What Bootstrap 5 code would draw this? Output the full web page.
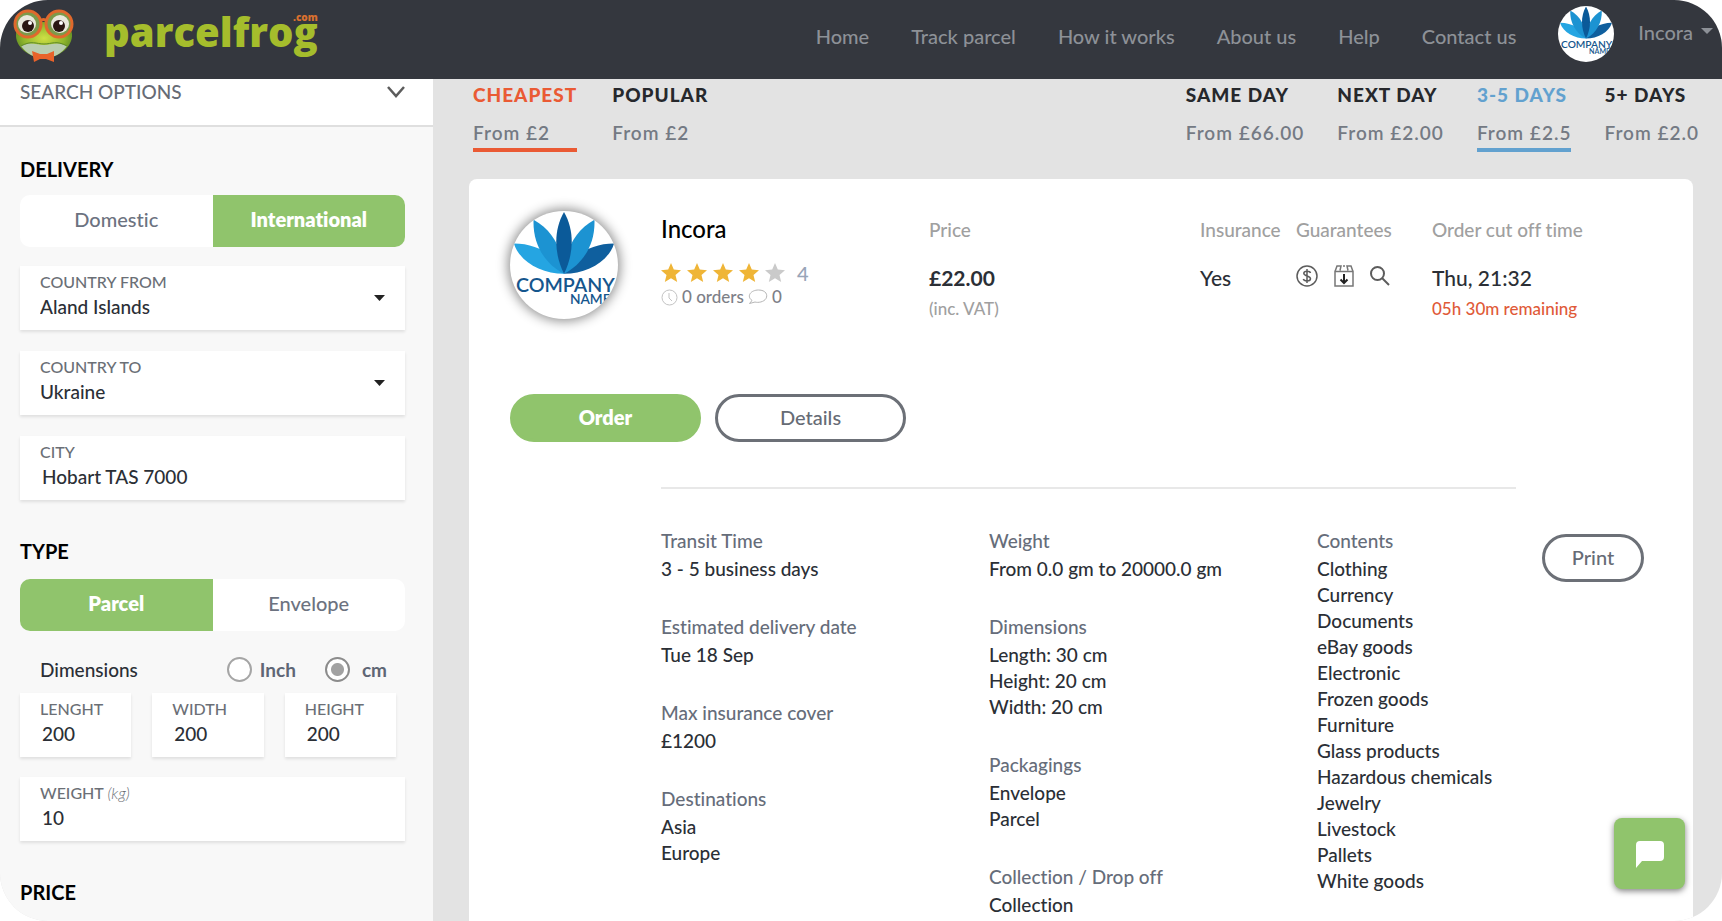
<!DOCTYPE html>
<html lang="en">
<head>
<meta charset="utf-8">
<meta name="viewport" content="width=device-width, initial-scale=1">
<title>parcelfrog.com</title>
<link href="https://cdn.jsdelivr.net/npm/bootstrap@5.3.0/dist/css/bootstrap.min.css" rel="stylesheet">
<style>
  body { font-family: "Lato Medium", Lato, "Liberation Sans", sans-serif; font-size: 19px; line-height: 26px; color: #2b2f36; font-weight: 500; font-variant-ligatures: none; background: #fff; }
  .app-shell { height: 100vh; border-radius: 48px; overflow: hidden; background: #e3e3e3; }

  /* header */
  .top-bar { height: 79px; background: #34373e; padding: 0 9px 8px 12px; }
  .frog { width: 64px; height: 56px; }
  .wordmark { font-family: "Open Sans", sans-serif; font-weight: 800; font-size: 40px; line-height: 48px; color: #a5bd2c; margin: 0 0 8px 28px; position: relative; }
  .wordmark sup { position: absolute; right: 0; top: 4px; font-size: 10px; line-height: 10px; color: #d9702f; }
  .main-nav { gap: 42px; margin-right: 42px; font-size: 20px; }
  .main-nav a { color: #8d9197; text-decoration: none; white-space: nowrap; }
  .account { color: #8d9197; font-size: 20px; background: none; border: 0; padding: 0; }
  .account::after { margin-left: 8px; }

  /* search panel */
  .search-side { width: 433px; background: #f8f8f8; }
  .side-head { height: 48px; background: #fff; border-bottom: 2px solid #dfdfdf; padding: 0 28px 20px 20px; color: #666b75; }
  .side-body { padding: 30px 28px 0 20px; }
  .side-title { font-family: Lato, sans-serif; font-size: 20px; line-height: 24px; font-weight: 700; color: #000; margin: 0 0 14px; }
  .side-title.later { margin: 39px 0 16px; }
  .toggle { border-radius: 10px; overflow: hidden; background: #fff; height: 52px; }
  .toggle .btn { flex: 1 1 0; border: 0; border-radius: 0; padding: 0 0 4px; font-size: 20px; font-weight: 600; color: #6c7280; }
  .toggle .btn-check:checked + .btn { background: #90c46c; color: #fff; font-family: Lato, sans-serif; font-weight: 800; }
  .field-list { gap: 21px; margin-top: 19px; }
  .field { background: #fff; height: 64px; padding: 7px 20px; box-shadow: 0 2px 3px rgba(0,0,0,.1); position: relative; }
  .field label { display: block; font-size: 16px; line-height: 18px; height: 18px; color: #6b6f76; }
  .field label em { font-family: Lato, sans-serif; font-weight: 300; }
  .field input, .field select { display: block; width: 100%; height: 32px; border: 0; padding: 0; background: none; outline: 0; appearance: none; font-size: 19px; line-height: 32px; color: #2b2f36; font-weight: 500; }
  .field input { padding-left: 2px; }
  .field .caret { position: absolute; right: 20px; top: 29px; pointer-events: none; }
  .units { margin: 26px 18px 11px 20px; height: 25px; }
  .units label { font-family: Lato, sans-serif; font-weight: 700; color: #5f6675; }
  .units label[for="inch"] { margin-right: 29px; }
  .unit-radio { appearance: none; width: 25px; height: 25px; margin: 0; border: 2px solid #a5a5a5; border-radius: 50%; background: #fff; }
  .unit-radio:checked { border-color: #8c8c8c; background: radial-gradient(circle, #a2a2a2 0 6px, #fff 7px); }
  .size-row { gap: 21px; margin: 0 9px 20px 0; }

  /* results */
  .sort-bar { padding: 3px 23px 0 40px; height: 100px; }
  .kinds { gap: 35px; }
  .speeds { gap: 33px; }
  .sort-bar a { text-decoration: none; color: #26282c; font-family: Lato, sans-serif; font-weight: 900; text-transform: uppercase; white-space: nowrap; height: 70px; border-bottom: 4px solid transparent; letter-spacing: 1px; }
  .sort-bar small { display: block; font-size: 19px; font-weight: 600; color: #747a84; text-transform: none; margin-top: 12px; }
  .sort-bar .cheap { color: #ea5a34; border-color: #ea5a34; }
  .sort-bar .days { color: #62a1cf; border-color: #62a1cf; }
  .offer { background: #fff; border-radius: 8px 8px 0 0; padding: 32px 48px 0 41px; margin: 0 29px 0 36px; min-height: 0; }
  .round-logo { border-radius: 50%; background: #fff; flex: none; }
  .shadowed { box-shadow: 0 0 12px 2px rgba(0,0,0,.45); }
  .summary { padding-top: 6px; }
  .cap { color: #a0a0a0; }
  .figure-line { font-size: 21px; line-height: 26px; margin: 22px 0 6px; }
  .price-figure { font-family: Lato, sans-serif; font-weight: 700; }
  .tiny { font-size: 17px; line-height: 22px; color: #7d8087; }
  .note-line { font-size: 17px; line-height: 24px; color: #a0a0a0; }
  .note-line.hot { color: #e05a38; }
  .c-name { width: 268px; margin-left: 43px; }
  .c-price { width: 271px; }
  .c-ins { width: 96px; }
  .c-guar { width: 136px; }
  .stars { margin-top: 15px; gap: 6px; height: 26px; fill: #efb537; }
  .stars span { color: #98a5b8; font-size: 20px; margin-left: 6px; }
  .actions { gap: 14px; margin-top: 73px; }
  .pill { border-radius: 24px; height: 48px; font-size: 20px; padding: 0 0 2px; border: 3px solid #6c7077; color: #666b75; background: #fff; }
  .pill-go { background: #90c46c; border-color: #90c46c; color: #fff; font-family: Lato, sans-serif; font-weight: 800; }
  .pill-wide { width: 191px; }
  .pill-short { width: 102px; margin-top: 8px; }
  .more { margin-left: 151px; }
  .rule { height: 2px; background: #e8e8e8; margin: 45px 129px 37px 0; }
  .details { width: 328px; }
  .details.last { width: 225px; }
  .details dl { margin: 0; }
  .details dt { font-weight: 500; color: #666d7a; line-height: 30px; }
  .details dd { margin: 0; }
  .details dd + dt { margin-top: 30px; }
  .chat { position: fixed; right: 37px; bottom: 32px; width: 71px; height: 71px; border: 0; border-radius: 8px; background: #90c46c; box-shadow: 0 2px 6px rgba(0,0,0,.5); padding: 0; }
</style>
<script src="https://cdn.jsdelivr.net/npm/bootstrap@5.3.0/dist/js/bootstrap.bundle.min.js"></script>
</head>
<body>
<svg width="0" height="0" class="position-absolute" aria-hidden="true">
  <symbol id="lotus" viewBox="0 0 110 110">
    <path fill="#25a5e2" d="M4 33C28 33 50 46 55 64C32 64 10 52 4 33Z"/>
    <path fill="#0f5f9e" d="M106 33C82 33 60 46 55 64C78 64 100 52 106 33Z"/>
    <path fill="#1c93d2" d="M24 9C44 20 54 40 55 64C34 53 23 32 24 9Z"/>
    <path fill="#1c93d2" d="M86 9C66 20 56 40 55 64C76 53 87 32 86 9Z"/>
    <path fill="#0b5a99" d="M55 1C66 20 65 44 55 64C45 44 44 20 55 1Z"/>
    <text x="6" y="83" font-family="Lato" font-size="20" font-weight="600" fill="#15568d">COMPANY</text>
    <text x="61" y="95" font-family="Lato" font-size="14" font-weight="600" fill="#15568d">NAME</text>
  </symbol>
  <symbol id="star" viewBox="0 0 20 20"><path d="M10 0l2.800 6.600 7.200.6-5.500 4.700 1.700 7L10 15.200 3.800 18.900l1.700-7L0 7.200l7.200-.6z"/></symbol>
</svg>

<div class="app-shell d-flex flex-column">
  <header class="top-bar d-flex align-items-center flex-shrink-0">
    <a href="#" class="d-flex align-items-center text-decoration-none">
      <svg class="frog" viewBox="0 0 64 56" aria-hidden="true">
        <defs><radialGradient id="skin" cx=".5" cy=".45" r=".6"><stop offset="0" stop-color="#cfdf45"/><stop offset=".6" stop-color="#8fb62c"/><stop offset="1" stop-color="#527f22"/></radialGradient></defs>
        <path d="M4 26C4 10 60 10 60 26C61 38 48 50 32 50C16 50 3 38 4 26Z" fill="url(#skin)"/>
        <path d="M9 38C20 33 24 37 32 37C40 37 44 33 55 38C49 46 42 50 32 50C22 50 15 46 9 38Z" fill="#b9cdb0"/>
        <path d="M9 38C20 32 24 36 32 36C40 36 44 32 55 38" fill="none" stroke="#5f8a26" stroke-width="1"/>
        <circle cx="16" cy="16" r="13" fill="#7c9a4a" stroke="#e0692c" stroke-width="3"/>
        <circle cx="47" cy="16" r="13" fill="#7c9a4a" stroke="#e0692c" stroke-width="3"/>
        <path d="M28 13q3.500-3 7 0" fill="none" stroke="#e0692c" stroke-width="3"/>
        <circle cx="15" cy="16" r="9" fill="#e9e8dc"/><circle cx="48" cy="16" r="9" fill="#e9e8dc"/>
        <circle cx="16" cy="18" r="6" fill="#2a1612"/><circle cx="47" cy="18" r="6" fill="#2a1612"/>
        <circle cx="18" cy="15" r="2" fill="#fff"/><circle cx="49" cy="15" r="2" fill="#fff"/>
        <path d="M20 43L28 46H35L42 43V54L34 51H28L22 54Z" fill="#e8622a"/>
      </svg>
      <span class="wordmark">parcelfrog<sup>.com</sup></span>
    </a>
    <nav class="main-nav d-flex ms-auto" aria-label="Main">
      <a href="#">Home</a><a href="#">Track parcel</a><a href="#">How it works</a><a href="#">About us</a><a href="#">Help</a><a href="#">Contact us</a>
    </nav>
    <svg class="round-logo mb-1" width="56" height="56" role="img" aria-label="Company logo"><use href="#lotus"/></svg>
    <button type="button" class="account dropdown-toggle ms-4 mb-2">Incora</button>
  </header>

  <div class="d-flex flex-grow-1 overflow-hidden">
    <aside class="search-side flex-shrink-0">
      <div class="side-head d-flex justify-content-between align-items-center">SEARCH OPTIONS
        <svg width="18" height="12" viewBox="0 0 18 12" fill="none" stroke="#5c5c5c" stroke-width="2.500"><path d="M1 1l8 9 8-9"/></svg>
      </div>
      <form class="side-body">
        <h2 class="side-title">DELIVERY</h2>
        <div class="toggle d-flex" role="group" aria-label="Delivery">
          <input class="btn-check" type="radio" name="zone" id="zone-dom"><label class="btn d-flex align-items-center justify-content-center" for="zone-dom">Domestic</label>
          <input class="btn-check" type="radio" name="zone" id="zone-int" checked><label class="btn d-flex align-items-center justify-content-center" for="zone-int">International</label>
        </div>
        <div class="field-list d-flex flex-column">
          <div class="field"><label for="from">COUNTRY FROM</label><select id="from"><option>Aland Islands</option></select>
            <svg class="caret" width="11" height="6" viewBox="0 0 11 6"><path d="M0 0h11L5.500 6z" fill="#222"/></svg></div>
          <div class="field"><label for="to">COUNTRY TO</label><select id="to"><option>Ukraine</option></select>
            <svg class="caret" width="11" height="6" viewBox="0 0 11 6"><path d="M0 0h11L5.500 6z" fill="#222"/></svg></div>
          <div class="field"><label for="city">CITY</label><input id="city" type="text" value="Hobart TAS 7000"></div>
        </div>

        <h2 class="side-title later">TYPE</h2>
        <div class="toggle d-flex" role="group" aria-label="Type">
          <input class="btn-check" type="radio" name="kind" id="kind-parcel" checked><label class="btn d-flex align-items-center justify-content-center" for="kind-parcel">Parcel</label>
          <input class="btn-check" type="radio" name="kind" id="kind-env"><label class="btn d-flex align-items-center justify-content-center" for="kind-env">Envelope</label>
        </div>
        <div class="units d-flex align-items-center">
          <span class="me-auto">Dimensions</span>
          <input class="unit-radio me-2" type="radio" name="unit" id="inch"><label for="inch">Inch</label>
          <input class="unit-radio me-2" type="radio" name="unit" id="cm" checked><label class="ms-1" for="cm">cm</label>
        </div>
        <div class="size-row d-flex">
          <div class="field flex-fill"><label for="len">LENGHT</label><input id="len" type="text" value="200"></div>
          <div class="field flex-fill"><label for="wid">WIDTH</label><input id="wid" type="text" value="200"></div>
          <div class="field flex-fill"><label for="hei">HEIGHT</label><input id="hei" type="text" value="200"></div>
        </div>
        <div class="field"><label for="weight">WEIGHT <em>(kg)</em></label><input id="weight" type="text" value="10"></div>
        <h2 class="side-title later">PRICE</h2>
      </form>
    </aside>

    <main class="flex-grow-1 d-flex flex-column">
      <div class="sort-bar d-flex justify-content-between flex-shrink-0">
        <div class="kinds d-flex">
          <a href="#" class="cheap">Cheapest<small>From £2</small></a>
          <a href="#">Popular<small>From £2</small></a>
        </div>
        <div class="speeds d-flex">
          <a href="#">Same day<small>From £66.00</small></a>
          <a href="#">Next day<small>From £2.00</small></a>
          <a href="#" class="days">3-5 days<small>From £2.5</small></a>
          <a href="#">5+ days<small>From £2.0</small></a>
        </div>
      </div>

      <article class="offer flex-grow-1">
        <div class="d-flex">
          <svg class="round-logo shadowed" width="108" height="108" role="img" aria-label="Company logo"><use href="#lotus"/></svg>
          <div class="summary c-name">
            <h1 class="fs-4 m-0 text-black lh-1 pb-1 fw-medium">Incora</h1>
            <div class="stars d-flex align-items-center">
              <svg width="20" height="20"><use href="#star"/></svg>
              <svg width="20" height="20"><use href="#star"/></svg>
              <svg width="20" height="20"><use href="#star"/></svg>
              <svg width="20" height="20"><use href="#star"/></svg>
              <svg width="20" height="20" fill="#cacaca"><use href="#star"/></svg>
              <span>4</span>
            </div>
            <div class="tiny d-flex align-items-center">
              <svg width="17" height="17" viewBox="0 0 17 17" fill="none" stroke="#c3c3c3"><circle cx="8.500" cy="8.500" r="7.500"/><path d="M8 4v5l3 3"/></svg>
              <span class="ms-1 me-1">0 orders</span>
              <svg width="20" height="16" viewBox="0 0 20 16" fill="none" stroke="#b5b5b5"><path d="M4 11.500C-2 7 3 1 10.500 1S20 6 18 9.500 10 14 7 13l-5.500 1.500z"/></svg>
              <span class="ms-1">0</span>
            </div>
          </div>
          <div class="summary c-price">
            <div class="cap">Price</div>
            <div class="figure-line price-figure">£22.00</div>
            <div class="note-line">(inc. VAT)</div>
          </div>
          <div class="summary c-ins">
            <div class="cap">Insurance</div>
            <div class="figure-line">Yes</div>
          </div>
          <div class="summary c-guar">
            <div class="cap">Guarantees</div>
            <div class="figure-line d-flex align-items-end gap-3">
              <svg width="22" height="22" viewBox="0 0 22 22" fill="none" stroke="#5c5c5c" stroke-width="1.500"><circle cx="11" cy="11" r="10"/><path d="M14.500 8C14 6 8 5.500 7.800 8.300S14.500 10.800 14.500 13.700 8 16.500 7.300 14M11 4v14"/></svg>
              <svg width="20" height="22" viewBox="0 0 20 22" fill="none" stroke="#777" stroke-width="1.500"><path d="M1 6.500h18V21H1zM1 6.500L3 1h4L6 5.500M19 6.500L17 1h-4l1 4.500M9 1h2"/><path d="M10 9v9M6.500 14.500L10 18l3.500-3.500" stroke="#222" stroke-width="2"/></svg>
              <svg width="20" height="22" viewBox="0 0 20 22" fill="none" stroke="#5c5c5c" stroke-width="2"><circle cx="7.500" cy="8.500" r="6.500"/><path d="M12 13l7 7"/></svg>
            </div>
          </div>
          <div class="summary">
            <div class="cap">Order cut off time</div>
            <div class="figure-line">Thu, 21:32</div>
            <div class="note-line hot">05h 30m remaining</div>
          </div>
        </div>

        <div class="actions d-flex">
          <button type="button" class="btn pill pill-go pill-wide">Order</button>
          <button type="button" class="btn pill pill-wide">Details</button>
        </div>

        <div class="more">
          <div class="rule"></div>
          <div class="d-flex align-items-start">
            <div class="details">
              <dl>
                <dt>Transit Time</dt><dd>3 - 5 business days</dd>
                <dt>Estimated delivery date</dt><dd>Tue 18 Sep</dd>
                <dt>Max insurance cover</dt><dd>£1200</dd>
                <dt>Destinations</dt><dd>Asia</dd><dd>Europe</dd>
              </dl>
            </div>
            <div class="details">
              <dl>
                <dt>Weight</dt><dd>From 0.0 gm to 20000.0 gm</dd>
                <dt>Dimensions</dt><dd>Length: 30 cm</dd><dd>Height: 20 cm</dd><dd>Width: 20 cm</dd>
                <dt>Packagings</dt><dd>Envelope</dd><dd>Parcel</dd>
                <dt>Collection / Drop off</dt><dd>Collection</dd>
              </dl>
            </div>
            <div class="details last">
              <dl>
                <dt>Contents</dt><dd>Clothing</dd><dd>Currency</dd><dd>Documents</dd><dd>eBay goods</dd><dd>Electronic</dd><dd>Frozen goods</dd><dd>Furniture</dd><dd>Glass products</dd><dd>Hazardous chemicals</dd><dd>Jewelry</dd><dd>Livestock</dd><dd>Pallets</dd><dd>White goods</dd>
              </dl>
            </div>
            <button type="button" class="btn pill pill-short">Print</button>
          </div>
        </div>
      </article>
    </main>
  </div>
</div>
<button type="button" class="chat" aria-label="Chat">
  <svg width="28" height="27" viewBox="0 0 28 27" fill="#fff"><path d="M4 0h20a4 4 0 0 1 4 4v12a4 4 0 0 1-4 4H6l-6 7V4a4 4 0 0 1 4-4z"/></svg>
</button>
</body>
</html>
